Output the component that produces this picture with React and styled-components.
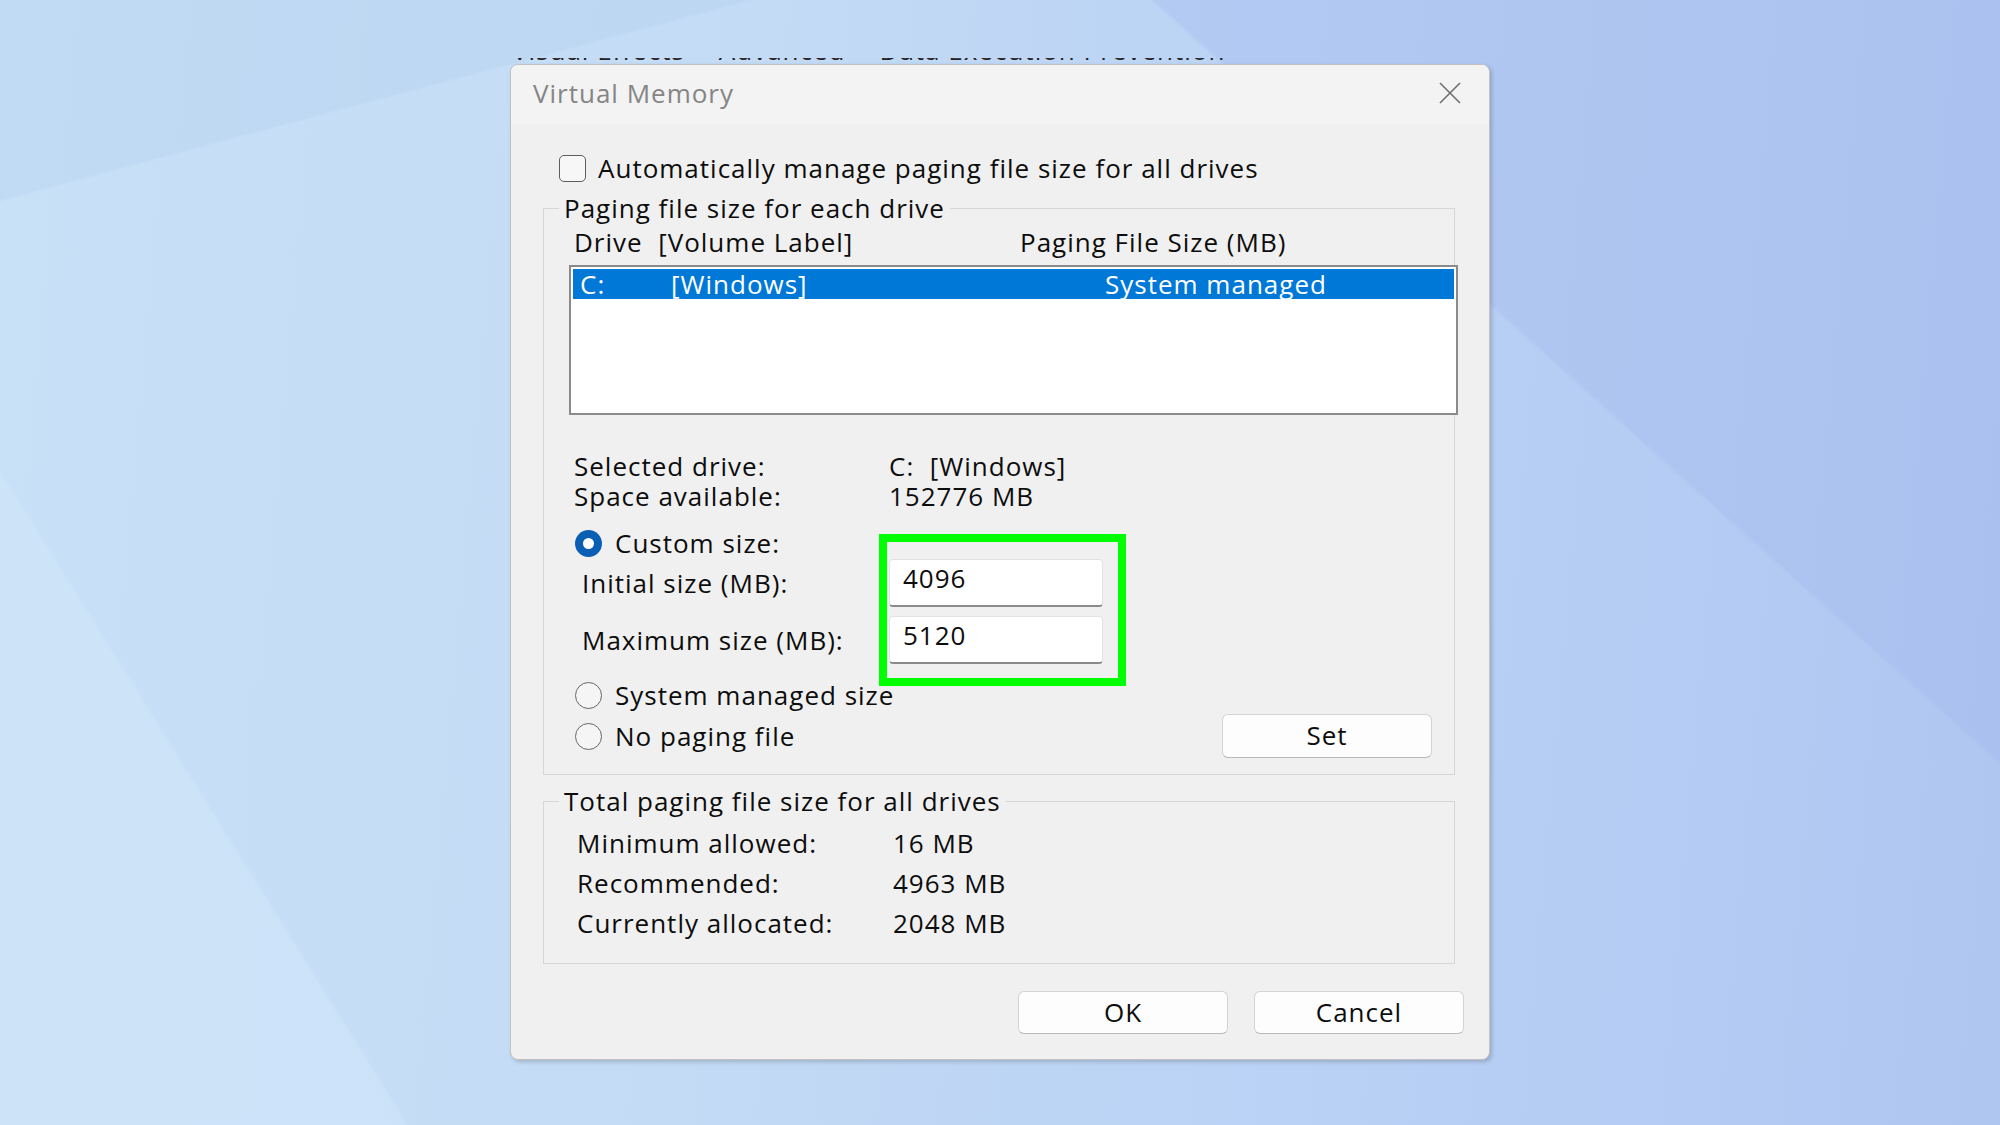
import React from "react";
import styled, { createGlobalStyle } from "styled-components";

const GlobalStyle = createGlobalStyle`
  html, body { margin: 0; padding: 0; }
  body { font-family: "Open Sans", "Noto Sans", sans-serif; }
  * { box-sizing: border-box; }
`;

const Page = styled.div`
  width: 2000px;
  height: 1125px;
  overflow: hidden;
  display: flex;
  justify-content: center;
  align-items: flex-start;
  padding-top: 58px;
  background:
    linear-gradient(165deg, rgba(176, 204, 236, 0.3) 0 12%, transparent 12.2%),
    linear-gradient(58deg, rgba(212, 234, 252, 0.4) 0 15%, transparent 15.2%),
    linear-gradient(222deg, rgba(160, 182, 236, 0.35) 0 26%, transparent 26.2%),
    linear-gradient(95deg, #c9e1f7 0%, #c3dbf4 35%, #bad2f5 65%, #afc6f1 100%);
`;

const Column = styled.div`
  width: 980px;
  display: flex;
  flex-direction: column;
`;

const BehindStrip = styled.div`
  height: 6px;
  overflow: hidden;
  display: flex;
  gap: 34px;
  padding-left: 2px;
  font-size: 26px;
  line-height: 26px;
  letter-spacing: 1px;
  color: #222222;
  white-space: nowrap;
`;

const StripText = styled.span`
  display: block;
  margin-top: -21px;
`;

const Dialog = styled.section`
  width: 980px;
  background: #f0f0f0;
  border: 1px solid #c2c2c2;
  border-radius: 8px;
  box-shadow: 2px 2px 4px rgba(0, 0, 0, 0.18);
  overflow: hidden;
  color: #0d0d0d;
  font-size: 26px;
  letter-spacing: 1px;
`;

const TitleBar = styled.div`
  height: 59px;
  display: flex;
  align-items: center;
  justify-content: space-between;
  padding: 0 27px 4px 22px;
  background: #f3f3f3;
`;

const Title = styled.span`
  color: #858585;
  line-height: 32px;
`;

const CloseIcon = styled.svg`
  width: 24px;
  height: 24px;
  display: block;
`;

const Body = styled.div`
  padding: 28px 34px 25px 32px;
`;

const CheckRow = styled.label`
  display: flex;
  align-items: center;
  gap: 12px;
  height: 32px;
  line-height: 32px;
  margin-left: 16px;
`;

const CheckBox = styled.span`
  width: 27px;
  height: 27px;
  border: 1.5px solid #5e5e5e;
  border-radius: 5px;
  background: #f7f7f7;
  flex: none;
`;

const Group = styled.fieldset`
  margin: ${(p) => p.$mt || 0}px 0 0 0;
  padding: 0;
  border: 1px solid #d6d6d6;
  min-width: 0;
`;

const Legend = styled.legend`
  margin-left: 15px;
  padding: 0 5px;
  line-height: 32px;
`;

const GroupInner = styled.div`
  padding: ${(p) => p.$pad};
`;

const ColumnHeader = styled.div`
  display: grid;
  grid-template-columns: 446px 1fr;
  padding-left: 5px;
  height: 30px;
  line-height: 30px;
  white-space: pre;
`;

const ListBox = styled.div`
  margin: 8px -4px 0 0;
  height: 150px;
  border: 2px solid #8a8a8a;
  padding: 2px;
  background: #ffffff;
`;

const ListRow = styled.div`
  display: grid;
  grid-template-columns: 91px 434px 1fr;
  height: 30px;
  line-height: 30px;
  padding-left: 7px;
  background: ${(p) => (p.$selected ? "#0078d7" : "transparent")};
  color: ${(p) => (p.$selected ? "#ffffff" : "inherit")};
`;

const InfoGrid = styled.div`
  margin-top: 36px;
  display: grid;
  grid-template-columns: 315px 1fr;
  padding-left: 5px;
  line-height: 30px;
  white-space: pre;
`;

const SizeBlock = styled.div`
  position: relative;
  margin-top: 17px;
`;

const RadioRow = styled.label`
  display: flex;
  align-items: center;
  gap: 13px;
  height: 30px;
  line-height: 30px;
  padding-left: 6px;
  margin-top: ${(p) => p.$mt || 0}px;
`;

const Radio = styled.span`
  width: 27px;
  height: 27px;
  border-radius: 50%;
  flex: none;
  display: flex;
  align-items: center;
  justify-content: center;
  background: ${(p) => (p.$checked ? "#0a5fb4" : "#f5f5f5")};
  border: ${(p) => (p.$checked ? "none" : "1.5px solid #666666")};
  &::after {
    content: "";
    display: ${(p) => (p.$checked ? "block" : "none")};
    width: 11px;
    height: 11px;
    border-radius: 50%;
    background: #ffffff;
  }
`;

const FieldRow = styled.div`
  display: grid;
  grid-template-columns: 307px 214px;
  align-items: center;
  padding-left: 13px;
  margin-top: ${(p) => p.$mt || 0}px;
`;

const TextInput = styled.input`
  width: 214px;
  height: 48px;
  border: 1px solid #e2e2e2;
  border-bottom: 2px solid #8a8a8a;
  border-radius: 4px;
  background: #ffffff;
  padding: 0 13px 9px;
  font: inherit;
  letter-spacing: inherit;
  color: #0d0d0d;
  outline: none;
`;

const Annotation = styled.div`
  position: absolute;
  top: 6px;
  left: 310px;
  width: 247px;
  height: 152px;
  border: 8px solid #00ff00;
  pointer-events: none;
`;

const ActionRow = styled.div`
  display: flex;
  align-items: center;
  justify-content: space-between;
  margin-top: 4px;
  height: 44px;
`;

const Button = styled.button`
  width: 210px;
  height: ${(p) => p.$h || 43}px;
  margin-right: ${(p) => p.$mr || 0}px;
  border: 1px solid #d3d3d3;
  border-bottom-color: #b9b9b9;
  border-radius: 6px;
  background: #fdfdfd;
  font: inherit;
  letter-spacing: inherit;
  color: #0d0d0d;
  padding: 0 0 2px;
`;

const TotalsGrid = styled.div`
  display: grid;
  grid-template-columns: 316px 1fr;
  row-gap: 10px;
  line-height: 30px;
`;

const Footer = styled.div`
  display: flex;
  justify-content: flex-end;
  gap: 26px;
  margin: 27px -9px 0 0;
`;

export default function App() {
  return (
    <>
      <GlobalStyle />
      <Page>
        <Column>
          <BehindStrip aria-hidden="true">
            <StripText>Visual Effects</StripText>
            <StripText>Advanced</StripText>
            <StripText>Data Execution Prevention</StripText>
          </BehindStrip>
          <Dialog>
            <TitleBar>
              <Title>Virtual Memory</Title>
              <CloseIcon viewBox="0 0 24 24">
                <path d="M2 2 L22 22 M22 2 L2 22" stroke="#6f6f6f" strokeWidth="1.6" fill="none" />
              </CloseIcon>
            </TitleBar>
            <Body>
              <CheckRow>
                <CheckBox />
                <span>Automatically manage paging file size for all drives</span>
              </CheckRow>

              <Group $mt={8}>
                <Legend>Paging file size for each drive</Legend>
                <GroupInner $pad="3px 0 16px 25px">
                  <ColumnHeader>
                    <span>Drive  [Volume Label]</span>
                    <span>Paging File Size (MB)</span>
                  </ColumnHeader>
                  <ListBox>
                    <ListRow $selected>
                      <span>C:</span>
                      <span>[Windows]</span>
                      <span>System managed</span>
                    </ListRow>
                  </ListBox>

                  <InfoGrid>
                    <span>Selected drive:</span>
                    <span>C:  [Windows]</span>
                    <span>Space available:</span>
                    <span>152776 MB</span>
                  </InfoGrid>

                  <SizeBlock>
                    <RadioRow>
                      <Radio $checked />
                      <span>Custom size:</span>
                    </RadioRow>
                    <FieldRow $mt={1}>
                      <span>Initial size (MB):</span>
                      <TextInput readOnly value="4096" />
                    </FieldRow>
                    <FieldRow $mt={9}>
                      <span>Maximum size (MB):</span>
                      <TextInput readOnly value="5120" />
                    </FieldRow>
                    <Annotation />
                  </SizeBlock>

                  <RadioRow $mt={16}>
                    <Radio />
                    <span>System managed size</span>
                  </RadioRow>
                  <ActionRow>
                    <RadioRow>
                      <Radio />
                      <span>No paging file</span>
                    </RadioRow>
                    <Button $h={44} $mr={22}>Set</Button>
                  </ActionRow>
                </GroupInner>
              </Group>

              <Group $mt={10}>
                <Legend>Total paging file size for all drives</Legend>
                <GroupInner $pad="11px 0 25px 33px">
                  <TotalsGrid>
                    <span>Minimum allowed:</span>
                    <span>16 MB</span>
                    <span>Recommended:</span>
                    <span>4963 MB</span>
                    <span>Currently allocated:</span>
                    <span>2048 MB</span>
                  </TotalsGrid>
                </GroupInner>
              </Group>

              <Footer>
                <Button>OK</Button>
                <Button>Cancel</Button>
              </Footer>
            </Body>
          </Dialog>
        </Column>
      </Page>
    </>
  );
}
